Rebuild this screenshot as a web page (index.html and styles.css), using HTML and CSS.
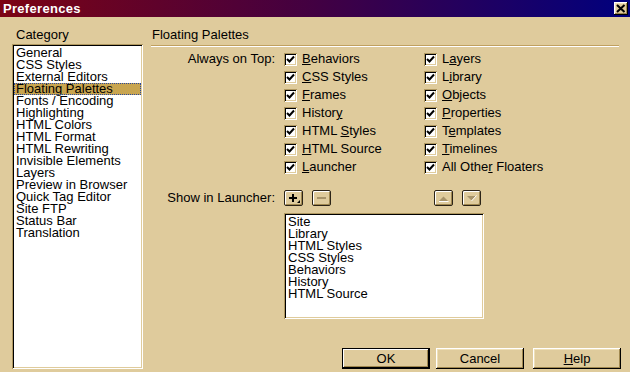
FILE: index.html
```html
<!DOCTYPE html>
<html lang="en">
<head>
    <meta charset="UTF-8">
    <title>Preferences</title>
    <link rel="stylesheet" href="styles.css">
</head>
<body>
<div class="window">
    <div class="titlebar">
        <span class="title">Preferences</span>
        <button class="close">
            <svg width="14" height="13" viewBox="0 0 14 13"><path d="M3 3 L10.5 10 M10.5 3 L3 10" stroke="#000" stroke-width="2" fill="none"/></svg>
        </button>
    </div>

    <div class="content">
        <div class="category">
            <div class="cat-label">Category</div>
            <ul class="listbox cat-list">
                <li>General</li>
                <li>CSS Styles</li>
                <li>External Editors</li>
                <li class="selected">Floating Palettes</li>
                <li>Fonts / Encoding</li>
                <li>Highlighting</li>
                <li>HTML Colors</li>
                <li>HTML Format</li>
                <li>HTML Rewriting</li>
                <li>Invisible Elements</li>
                <li>Layers</li>
                <li>Preview in Browser</li>
                <li>Quick Tag Editor</li>
                <li>Site FTP</li>
                <li>Status Bar</li>
                <li>Translation</li>
            </ul>
        </div>

        <div class="panel">
            <div class="panel-title">Floating Palettes</div>

            <div class="ontop">
                <div class="field-label">Always on Top:</div>
                <div class="check-grid">
                    <label class="check"><span class="box"></span><span><u>B</u>ehaviors</span></label>
                    <label class="check"><span class="box"></span><span><u>C</u>SS Styles</span></label>
                    <label class="check"><span class="box"></span><span><u>F</u>rames</span></label>
                    <label class="check"><span class="box"></span><span>Histor<u>y</u></span></label>
                    <label class="check"><span class="box"></span><span>HTML <u>S</u>tyles</span></label>
                    <label class="check"><span class="box"></span><span><u>H</u>TML Source</span></label>
                    <label class="check"><span class="box"></span><span><u>L</u>auncher</span></label>
                    <label class="check"><span class="box"></span><span>L<u>a</u>yers</span></label>
                    <label class="check"><span class="box"></span><span>L<u>i</u>brary</span></label>
                    <label class="check"><span class="box"></span><span><u>O</u>bjects</span></label>
                    <label class="check"><span class="box"></span><span><u>P</u>roperties</span></label>
                    <label class="check"><span class="box"></span><span>T<u>e</u>mplates</span></label>
                    <label class="check"><span class="box"></span><span><u>T</u>imelines</span></label>
                    <label class="check"><span class="box"></span><span>All Othe<u>r</u> Floaters</span></label>
                </div>
            </div>

            <div class="launcher">
                <div class="field-label short">Show in Launcher:</div>
                <div class="launcher-box">
                    <div class="tools">
                        <button class="tool">
                            <svg width="17" height="14" viewBox="0 0 17 14"><path d="M8 3 V11 M4 7 H12" stroke="#000" stroke-width="2"/><path d="M12 12 L15 12 L15 9 Z" fill="#000"/></svg>
                        </button>
                        <button class="tool gap">
                            <svg width="17" height="14" viewBox="0 0 17 14"><path d="M4 7 H13" stroke="#a8946a" stroke-width="2"/></svg>
                        </button>
                        <button class="tool push">
                            <svg width="17" height="14" viewBox="0 0 17 14"><path d="M4 10 L13 10 L8.5 5.5 Z" fill="#a8946a"/><path d="M4 10.5 H13.5" stroke="#fff"/></svg>
                        </button>
                        <button class="tool gap">
                            <svg width="17" height="14" viewBox="0 0 17 14"><path d="M4 5 L13 5 L8.5 9.5 Z" fill="#a8946a"/><path d="M13.5 4.5 L8.5 10" stroke="#fff"/></svg>
                        </button>
                    </div>
                    <ul class="listbox launch-list">
                        <li>Site</li>
                        <li>Library</li>
                        <li>HTML Styles</li>
                        <li>CSS Styles</li>
                        <li>Behaviors</li>
                        <li>History</li>
                        <li>HTML Source</li>
                    </ul>
                </div>
            </div>

            <div class="actions">
                <button class="btn default">OK</button>
                <button class="btn cancel">Cancel</button>
                <button class="btn help"><u>H</u>elp</button>
            </div>
        </div>
    </div>
</div>
</body>
</html>
```

FILE: styles.css
```css
body {
    margin: 0;
    font-family: "Liberation Sans", Arial, sans-serif;
    font-size: 13px;
    color: #000;
}
button {
    font-family: inherit;
    font-size: 13px;
    padding: 0;
    border: none;
    background: #dfcb9c;
    color: #000;
}
u {
    text-underline-offset: 1px;
}
.window {
    width: 630px;
    height: 372px;
    background: #dfcb9c;
    overflow: hidden;
}
.titlebar {
    height: 17px;
    display: flex;
    align-items: center;
    justify-content: space-between;
    padding: 0 2px 0 3px;
    background: linear-gradient(90deg, #7c0414 0%, #420042 50%, #00007e 100%);
    color: #fff;
    font-weight: bold;
    line-height: 17px;
    letter-spacing: 0.3px;
}
.close {
    width: 14px;
    height: 13px;
    display: flex;
    box-shadow: inset -1px -1px #000, inset 1px 1px #fff, inset -2px -2px #a08850, inset 2px 2px #efe0b8;
}
.content {
    display: flex;
    padding-top: 11px;
}
.category {
    margin-left: 12px;
    width: 131px;
}
.cat-label {
    line-height: 14px;
    padding-left: 4px;
}
.listbox {
    list-style: none;
    margin: 0;
    padding: 3px 0 0;
    box-sizing: border-box;
    background: #fff;
    box-shadow: inset 1px 1px #b09860, inset -1px -1px #fff, inset 2px 2px #000, inset -2px -2px #dfcb9c;
}
.listbox li {
    line-height: 12px;
    height: 12px;
    margin: 0 2px;
    padding-left: 2px;
    white-space: nowrap;
}
.cat-list {
    margin-top: 2px;
    height: 325px;
}
.cat-list .selected {
    background: #c8a550;
    outline: 1px dotted #2848a0;
    outline-offset: -1px;
}
.panel {
    margin-left: 8px;
    width: 470px;
}
.panel-title {
    line-height: 14px;
    padding: 0 0 3px 1px;
    margin-right: 2px;
    border-bottom: 1px solid #c0a060;
    box-shadow: 0 1px 0 #fff;
}
.ontop {
    display: flex;
    margin-top: 4px;
}
.field-label {
    width: 124px;
    margin-right: 9px;
    text-align: right;
    line-height: 18px;
}
.field-label.short {
    line-height: 16px;
}
.check-grid {
    display: grid;
    grid-template-columns: 140px auto;
    grid-template-rows: repeat(7, 18px);
    grid-auto-flow: column;
}
.check {
    display: flex;
    align-items: flex-start;
    gap: 5px;
    line-height: 18px;
    white-space: nowrap;
}
.box {
    width: 13px;
    height: 13px;
    margin-top: 3px;
    flex: none;
    box-sizing: border-box;
    background: #fff url("data:image/svg+xml,%3Csvg xmlns='http://www.w3.org/2000/svg' width='13' height='13'%3E%3Cpath d='M3 6 L5.5 8.5 L10 3.5' stroke='%23000' stroke-width='2' fill='none'/%3E%3C/svg%3E") no-repeat;
    box-shadow: inset 1px 1px #b09860, inset -1px -1px #fff, inset 2px 2px #000, inset -2px -2px #dfcb9c;
}
.launcher {
    display: flex;
    margin-top: 14px;
}
.launcher-box {
    width: 200px;
}
.tools {
    display: flex;
    height: 16px;
    padding-right: 3px;
}
.tool {
    width: 19px;
    height: 16px;
    display: flex;
    align-items: center;
    justify-content: center;
    box-sizing: border-box;
    border: 1px solid #2c2418;
    border-radius: 2px;
    box-shadow: inset 1px 1px #fff, inset -1px -1px #a08850;
}
.tool.gap {
    margin-left: 9px;
}
.tool.push {
    margin-left: auto;
}
.launch-list {
    margin-top: 7px;
    height: 106px;
}
.actions {
    display: flex;
    justify-content: flex-end;
    margin-top: 29px;
}
.btn {
    width: 88px;
    height: 21px;
    box-sizing: border-box;
    box-shadow: inset -1px -1px #000, inset 1px 1px #fff, inset -2px -2px #a08850, inset 2px 2px #efe0b8;
}
.btn.default {
    border: 1px solid #000;
    box-shadow: inset -1px -1px #000, inset 1px 1px #fff, inset -2px -2px #a08850;
}
.btn.cancel {
    margin-left: 6px;
}
.btn.help {
    margin-left: 9px;
}
```
